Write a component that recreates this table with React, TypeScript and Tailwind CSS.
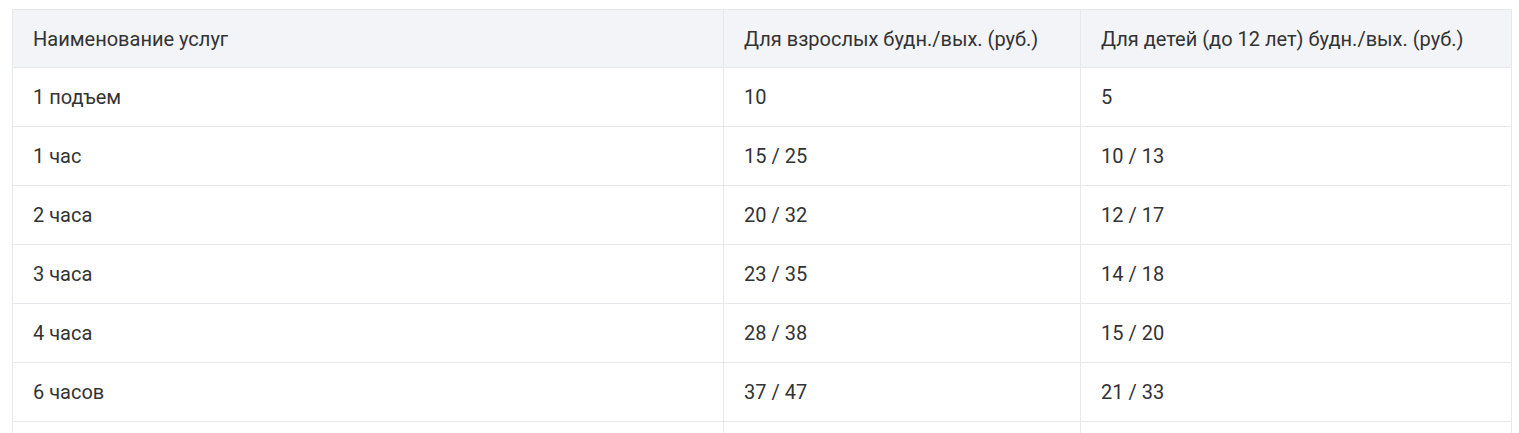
import React from "react";

const rows: [string, string, string][] = [
  ["1 подъем", "10", "5"],
  ["1 час", "15 / 25", "10 / 13"],
  ["2 часа", "20 / 32", "12 / 17"],
  ["3 часа", "23 / 35", "14 / 18"],
  ["4 часа", "28 / 38", "15 / 20"],
  ["6 часов", "37 / 47", "21 / 33"],
  ["Весь день", "45 / 55", "25 / 35"],
];

export default function App() {
  return (
    <div className="bg-white min-h-screen pl-[12px] pr-[7px] pt-[9px]">
      <table
        className="w-[1500px] table-fixed border-collapse text-[20px] text-[#333333]"
        style={{ fontFamily: "Roboto, 'Noto Sans', sans-serif" }}
      >
        <colgroup>
          <col className="w-[711px]" />
          <col className="w-[357px]" />
          <col />
        </colgroup>
        <thead>
          <tr className="bg-[#f2f4f7] h-[58px]">
            <th className="font-normal text-left pl-[20px] pr-4 border border-[#e6e8eb]">Наименование услуг</th>
            <th className="font-normal text-left pl-[20px] pr-4 border border-[#e6e8eb]">Для взрослых будн./вых. (руб.)</th>
            <th className="font-normal text-left pl-[20px] pr-4 border border-[#e6e8eb]">Для детей (до 12 лет) будн./вых. (руб.)</th>
          </tr>
        </thead>
        <tbody>
          {rows.map((r, i) => (
            <tr key={i} className="h-[59px]">
              {r.map((c, j) => (
                <td key={j} className="pl-[20px] pr-4 border border-[#e6e8eb]">
                  {c}
                </td>
              ))}
            </tr>
          ))}
        </tbody>
      </table>
    </div>
  );
}
